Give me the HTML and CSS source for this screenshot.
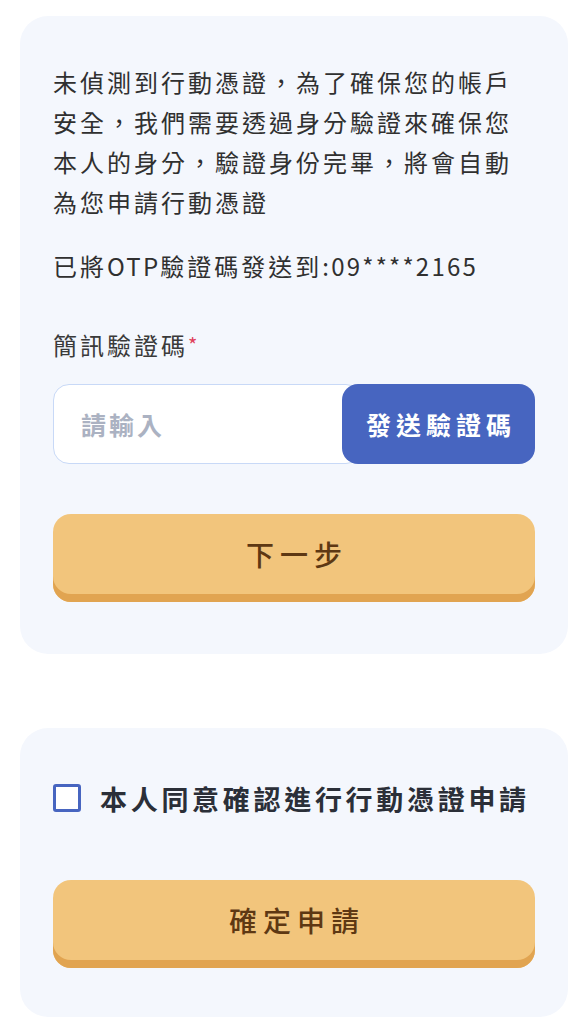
FILE: index.html
```html
<!DOCTYPE html>
<html lang="zh-Hant">
<head>
<meta charset="utf-8">
<title>行動憑證申請</title>
<link rel="stylesheet" href="styles.css">
</head>
<body>
<main class="page">
  <section class="card card-otp">
    <p class="intro">未偵測到行動憑證，為了確保您的帳戶安全，我們需要透過身分驗證來確保您本人的身分，驗證身份完畢，將會自動為您申請行動憑證</p>
    <p class="sent">已將<span class="latin">OTP</span>驗證碼發送到<span class="latin">:09****2165</span></p>
    <label class="field-label" for="otp">簡訊驗證碼<span class="req">*</span></label>
    <div class="otp-group">
      <input id="otp" class="otp-input" type="text" placeholder="請輸入">
      <button class="send-btn" type="button">發送驗證碼</button>
    </div>
    <button class="primary-btn" type="button">下一步</button>
  </section>

  <section class="card card-confirm">
    <label class="agree">
      <span class="checkbox"></span>
      <span class="agree-text">本人同意確認進行行動憑證申請</span>
    </label>
    <button class="primary-btn confirm-btn" type="button">確定申請</button>
  </section>
</main>
</body>
</html>
```

FILE: styles.css
```css
* { box-sizing: border-box; }

html, body {
  margin: 0;
  padding: 0;
  background: #ffffff;
}

body {
  font-family: "Noto Sans CJK TC", "Noto Sans", sans-serif;
  color: #333333;
}

.page {
  padding: 16px 20px;
  display: flex;
  flex-direction: column;
  gap: 74px;
}

.card {
  background: #f4f7fd;
  border-radius: 28px;
  padding: 46px 33px 52px;
  display: flex;
  flex-direction: column;
}

.intro,
.sent {
  margin: 0;
  font-size: 24px;
  line-height: 40px;
  letter-spacing: 3px;
  color: #303030;
}

.sent {
  margin-top: 24px;
}

.latin {
  letter-spacing: 2.2px;
}

.field-label {
  margin-top: 39px;
  font-size: 24px;
  line-height: 40px;
  letter-spacing: 3px;
  color: #3a3a3a;
}

.req {
  color: #e0405a;
  font-size: 20px;
  vertical-align: top;
  letter-spacing: 0;
}

.otp-group {
  margin-top: 19px;
  display: flex;
  height: 80px;
}

.otp-input {
  flex: 1;
  min-width: 0;
  height: 80px;
  margin-right: -20px;
  padding: 0 20px 0 27px;
  border: 1.5px solid #c8d9f7;
  border-radius: 16px;
  background: #ffffff;
  font-family: inherit;
  font-size: 25px;
  font-weight: 700;
  letter-spacing: 3px;
  color: #333333;
  outline: none;
}

.otp-input::placeholder {
  color: #abb2c2;
}

.send-btn {
  position: relative;
  width: 193px;
  height: 80px;
  border: none;
  border-radius: 16px;
  background: #4765c0;
  color: #ffffff;
  font-family: inherit;
  font-size: 25px;
  font-weight: 700;
  letter-spacing: 5px;
  padding: 0 0 0 5px;
}

.primary-btn {
  margin-top: 50px;
  height: 88px;
  border: none;
  border-radius: 18px;
  background: #f2c57c;
  box-shadow: inset 0 -8px 0 #e1a451;
  padding: 0 0 8px 6px;
  color: #5e3813;
  font-family: inherit;
  font-size: 28px;
  font-weight: 500;
  letter-spacing: 6px;
}

.card-confirm {
  padding-top: 50px;
  padding-bottom: 49px;
}

.agree {
  display: flex;
  align-items: center;
  gap: 19px;
  height: 40px;
}

.checkbox {
  width: 28px;
  height: 28px;
  border: 3px solid #4765c0;
  border-radius: 3px;
  background: #ffffff;
  flex: none;
}

.agree-text {
  font-size: 27px;
  font-weight: 700;
  letter-spacing: 3.7px;
  color: #2b2f38;
  white-space: nowrap;
}

.confirm-btn {
  margin-top: 62px;
}
```
